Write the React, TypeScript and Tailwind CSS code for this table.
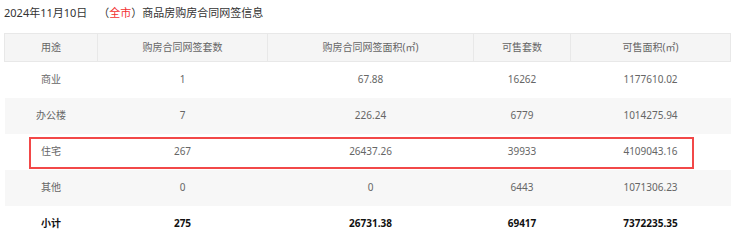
const rows = [
  { use: "商业", count: "1", area: "67.88", avail: "16262", availArea: "1177610.02" },
  { use: "办公楼", count: "7", area: "226.24", avail: "6779", availArea: "1014275.94" },
  { use: "住宅", count: "267", area: "26437.26", avail: "39933", availArea: "4109043.16" },
  { use: "其他", count: "0", area: "0", avail: "6443", availArea: "1071306.23" },
];

const total = { use: "小计", count: "275", area: "26731.38", avail: "69417", availArea: "7372235.35" };

const font = { fontFamily: '"Noto Sans", "Noto Sans CJK SC", sans-serif' };

export default function App() {
  return (
    <div className="min-h-[249px] w-[740px] bg-white pl-1 text-[#666]" style={font}>
      <h1 className="flex h-[27px] items-center text-[11px] font-normal text-[#333]">
        2024年11月10日
        <span className="ml-[11px]">（</span>
        <span className="text-[#f23030]">全市</span>
        <span>）商品房购房合同网签信息</span>
      </h1>

      <div className="relative mt-[6px] w-[726px]">
        <table className="w-[726px] table-fixed border-collapse text-center text-[10px]">
          <colgroup>
            <col className="w-[93px]" />
            <col className="w-[170px]" />
            <col className="w-[206px]" />
            <col className="w-[97px]" />
            <col className="w-[160px]" />
          </colgroup>
          <thead>
            <tr className="h-[28px] bg-[#f5f5f5]">
              <th className="border border-[#e8e8e8] font-normal">用途</th>
              <th className="border border-[#e8e8e8] font-normal">购房合同网签套数</th>
              <th className="border border-[#e8e8e8] font-normal">购房合同网签面积(㎡)</th>
              <th className="border border-[#e8e8e8] font-normal">可售套数</th>
              <th className="border border-[#e8e8e8] font-normal">可售面积(㎡)</th>
            </tr>
          </thead>
          <tbody>
            {rows.map((row, i) => (
              <tr key={row.use} className={i % 2 === 1 ? "h-[36px] bg-[#f7f7f7]" : "h-[36px]"}>
                <td>{row.use}</td>
                <td>{row.count}</td>
                <td>{row.area}</td>
                <td>{row.avail}</td>
                <td>{row.availArea}</td>
              </tr>
            ))}
            <tr className="h-[36px] font-bold text-[#111]">
              <td>{total.use}</td>
              <td>{total.count}</td>
              <td>{total.area}</td>
              <td>{total.avail}</td>
              <td>{total.availArea}</td>
            </tr>
          </tbody>
        </table>
        {/* highlight box drawn over the 住宅 row */}
        <div className="pointer-events-none absolute left-[25px] top-[104px] h-[32px] w-[665px] border-2 border-[#f24848]" />
      </div>
    </div>
  );
}
